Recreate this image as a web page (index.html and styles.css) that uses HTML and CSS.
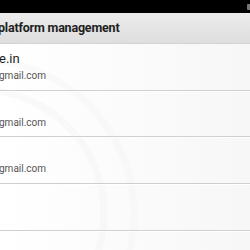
FILE: index.html
```html
<!DOCTYPE html>
<html lang="en">
<head>
  <meta charset="UTF-8" />
  <title>Platform management</title>
  <meta name="viewport" content="width=device-width, initial-scale=1">
  <link rel="stylesheet" href="styles.css">
</head>
<body>
  <div class="status-bar">
    <span class="battery"></span>
  </div>

  <header class="action-bar">
    <h1 class="action-title">platform management</h1>
  </header>

  <main class="user-list">
    <div class="user-item">
      <div class="user-name">e.in</div>
      <div class="user-email">gmail.com</div>
    </div>
    <div class="user-item">
      <div class="user-name">&nbsp;</div>
      <div class="user-email">gmail.com</div>
    </div>
    <div class="user-item">
      <div class="user-name">&nbsp;</div>
      <div class="user-email">gmail.com</div>
    </div>
    <div class="user-item">
      <div class="user-name">&nbsp;</div>
      <div class="user-email">&nbsp;</div>
    </div>
  </main>
</body>
</html>
```

FILE: styles.css
```css
:root {
  --bar-black: #000000;
  --bar-light: #ececec;
  --bar-dark: #dedede;
  --text-dark: #1e1e1e;
  --text-muted: #555555;
  --divider: #cfcfcf;
}
* { box-sizing: border-box; margin: 0; padding: 0; }
html, body { height: 100%; }
body {
  font-family: Roboto, 'Liberation Sans', sans-serif;
  background: #f7f7f7; overflow: hidden;
}
.status-bar {
  height: 13px; background: var(--bar-black);
  display: flex; justify-content: flex-end; align-items: center;
}
.battery {
  width: 3px; height: 6px; background: #777; border-radius: 1px 0 0 1px;
}
.action-bar {
  height: 31px; display: flex; align-items: center;
  background: linear-gradient(180deg, var(--bar-light) 0%, var(--bar-dark) 100%);
  border-bottom: 1px solid #d2d2d2;
}
.action-title {
  font-size: 12.5px; font-weight: 700; color: var(--text-dark);
  text-indent: -2px; white-space: nowrap; letter-spacing: -0.2px;
  padding-bottom: 1px;
}
.user-list {
  height: calc(100% - 44px);
  background:
    radial-gradient(circle at -20px 170px, transparent 0 120px, rgba(240, 240, 240, 0.35) 121px 127px, transparent 128px 150px, rgba(240, 240, 240, 0.3) 151px 157px, transparent 158px),
    linear-gradient(90deg, #ffffff 0%, #f7f7f7 100%);
}
.user-item {
  height: 46.7px; padding-top: 7px;
  border-bottom: 1px solid var(--divider);
  box-shadow: 0 1px 0 #ffffff;
  white-space: nowrap; overflow: hidden;
}
.user-name {
  font-size: 13px; color: var(--text-dark); line-height: 16px;
  text-indent: -1px;
}
.user-email {
  font-size: 10px; color: var(--text-muted); line-height: 13px;
  margin-top: 2px; text-indent: -1px;
}
```
